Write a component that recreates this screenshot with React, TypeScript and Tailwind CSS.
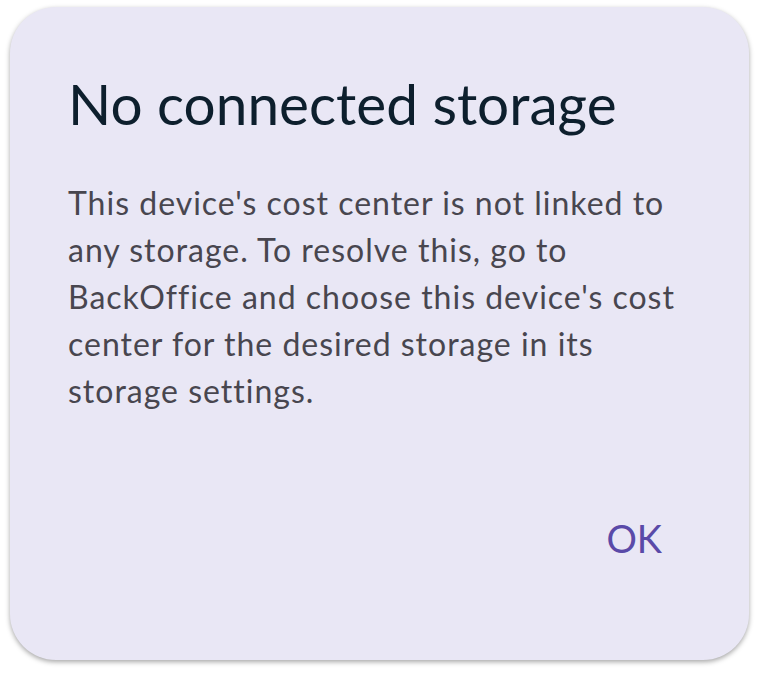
export default function App() {
  return (
    <div className="min-h-screen w-full bg-white pt-[7px] pl-[10px]" style={{ fontFamily: 'Lato, "Noto Sans", sans-serif' }}>
      <div className="flex h-[653px] w-[739px] flex-col rounded-[46px] bg-[#e9e7f5] px-[58px] pt-[62px] shadow-[0_2px_5px_rgba(0,0,0,0.35)]">
        <h1 className="text-[56.7px] leading-[68px] text-[#0d1f2d]">No connected storage</h1>
        <p className="mt-[42px] text-[32px] leading-[47px] tracking-[1px] text-[#48464f]">
          This device's cost center is not linked to any storage. To resolve this, go to BackOffice and choose this
          device's cost center for the desired storage in its storage settings.
        </p>
        <div className="mt-auto mb-[103px] mr-[29px] flex justify-end">
          <button className="text-[38px] leading-none text-[#5a4aa8]">OK</button>
        </div>
      </div>
    </div>
  )
}
